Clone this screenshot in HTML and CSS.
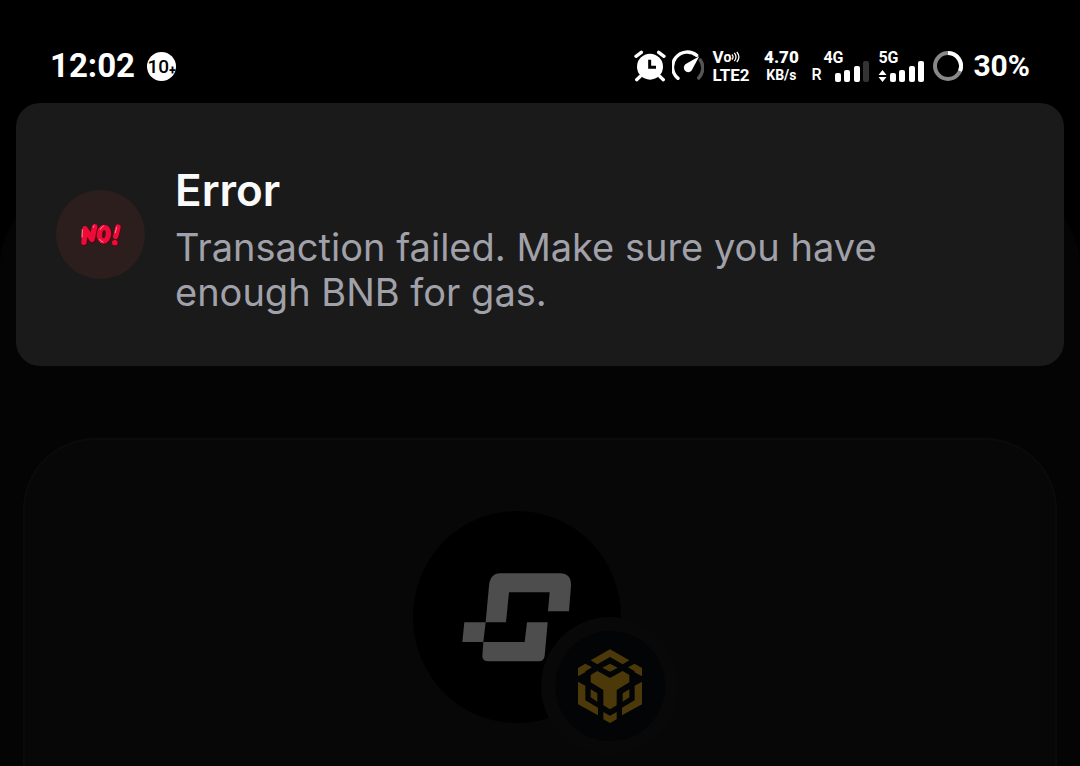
FILE: index.html
```
<!DOCTYPE html>
<html lang="en">
<head>
<meta charset="utf-8">
<meta name="viewport" content="width=device-width, initial-scale=1">
<title>Transaction error</title>
<link rel="stylesheet" href="styles.css">
</head>
<body>
<header class="status">
  <div class="status-side">
    <time class="clock">12:02</time>
    <span class="count">10<span class="plus">+</span></span>
  </div>
  <div class="status-side status-right">
    <svg class="icon-alarm" viewBox="0 0 96 96" aria-label="Alarm">
      <circle cx="48" cy="50" r="39" fill="#fff"/>
      <path d="M6 19L22 7M74 7L90 19M19 79L8 89M77 79L88 89" stroke="#fff" stroke-width="10" stroke-linecap="round"/>
      <path d="M47 29V52H66" fill="none" stroke="#000" stroke-width="9"/>
    </svg>
    <svg class="icon-gauge" viewBox="0 0 96 96" aria-label="Data speed">
      <path d="M18 85A43 43 0 0 1 74 16" fill="none" stroke="#fff" stroke-width="10" stroke-linecap="round"/>
      <path d="M85 30A43 43 0 0 1 80 84" fill="none" stroke="#555" stroke-width="10" stroke-linecap="round"/>
      <path d="M82 19L58 63A13 13 0 1 1 40 43Z" fill="#fff"/>
    </svg>
    <div class="stack lte">
      <span class="vo">V<small>o</small><svg class="waves" viewBox="0 0 12 14"><path d="M1 4Q4 7 1 10M4 2Q8 7 4 12M7 1Q12 7 7 13" fill="none" stroke="#fff" stroke-width="1.5"/></svg></span>
      <span>LTE2</span>
    </div>
    <div class="stack speed"><b>4.70</b><span>KB/s</span></div>
    <div class="signal">
      <span class="net net-roam">4G</span>
      <div class="signal-row">
        <span class="roam">R</span>
        <svg class="bars" viewBox="0 0 34 21"><rect y="12" width="6" height="9" rx="2"/><rect x="9" y="9" width="6" height="12" rx="2"/><rect x="19" y="5" width="6" height="16" rx="2"/><rect class="off" x="28" width="6" height="21" rx="2"/></svg>
      </div>
    </div>
    <div class="signal">
      <span class="net">5G</span>
      <div class="signal-row">
        <svg class="updown" viewBox="0 0 8 12"><path d="M0 5L4 0L8 5ZM0 7L4 12L8 7Z" fill="#fff"/></svg>
        <svg class="bars" viewBox="0 0 34 21"><rect y="12" width="6" height="9" rx="2"/><rect x="9" y="9" width="6" height="12" rx="2"/><rect x="19" y="5" width="6" height="16" rx="2"/><rect x="28" width="6" height="21" rx="2"/></svg>
      </div>
    </div>
    <svg class="ring" viewBox="0 0 30 30"><circle cx="15" cy="15" r="13" fill="none" stroke="#888" stroke-width="4"/><path d="M15 2A13 13 0 0 1 27 20" fill="none" stroke="#fff" stroke-width="4"/></svg>
    <span class="battery">30%</span>
  </div>
</header>

<div class="toast" role="alert">
  <div class="toast-icon">
    <svg viewBox="0 0 126 72" aria-label="No!">
      <g fill="none" stroke-linecap="round" stroke-linejoin="round">
        <path d="M14 60L17 19L38 52L46 13M74 15C57 18 55 54 72 56C91 55 93 16 74 15M116 15L109 42M106 61L107 61" stroke="#4d0716" stroke-width="19"/>
        <path d="M12 58L15 17L36 49L44 11M72 13C55 16 53 52 70 54C89 53 91 14 72 13M114 12L107 40M104 59L105 59" stroke="#f00a38" stroke-width="16"/>
        <path d="M7 20L6 42M40 13L42 9M61 19Q64 11 70 9M110 13L106 29M59 49Q63 57 69 57" stroke="#ff8b9d" stroke-width="3"/>
      </g>
    </svg>
  </div>
  <div class="toast-text">
    <h1>Error</h1>
    <p>Transaction failed. Make sure you have enough BNB for gas.</p>
  </div>
</div>

<main class="sheet">
  <section class="card">
    <div class="token">
      <svg class="token-logo" viewBox="39 32 624 636" aria-label="Token">
        <ellipse cx="351" cy="350" rx="312" ry="318" fill="#000"/>
        <path fill="#4d4d4d" d="M257 366L267 256Q271 219 301 219H480Q514 219 513 256L507 333H444L449 276H327L318 366ZM193 366H257L250 425H187ZM250 425H374L381 366H443L434 466Q432 483 416 483H266Q246 483 247 466Z"/>
      </svg>
      <svg class="chain" viewBox="423 352 414 414" aria-label="BNB Chain">
        <circle cx="630" cy="559" r="207" fill="#080808"/>
        <circle cx="631" cy="559" r="165" fill="#020406"/>
        <path fill="#4c390a" d="M630 449L688 482L668 494L630 472L592 494L572 482ZM630 492L653 504L630 516L607 504ZM534 505L556 492L576 503L556 515V518L534 530ZM726 505L704 492L684 503L704 515V518L726 530ZM534 546L556 558V602L594 624V647L534 614ZM726 546L704 558V602L666 624V647L726 614ZM572 569L592 581V606L572 593ZM688 569L668 581V606L688 593ZM592 514L630 535L668 514L688 526V548L650 571V617L630 629L610 617V571L572 548V526ZM610 637L630 648L650 637V659L630 670L610 659Z"/>
      </svg>
    </div>
  </section>
</main>
</body>
</html>
```
FILE: styles.css
```
* { box-sizing: border-box; }

body {
  margin: 0;
  height: 100vh;
  display: flex;
  flex-direction: column;
  overflow: hidden;
  background: #000;
  color: #fff;
  font-family: Roboto, "Liberation Sans", sans-serif;
}

svg { display: block; flex: none; }

.status {
  display: flex;
  justify-content: space-between;
  align-items: center;
  padding: 46px 50px 17px;
}

.status-side { display: flex; align-items: center; height: 40px; }
.status-side:first-child { gap: 12px; }
.clock, .battery { font-size: 33px; line-height: 40px; font-weight: 700; }
.battery { font-size: 30px; margin-left: 10px; }

.count {
  width: 29px;
  height: 29px;
  border-radius: 50%;
  background: #fff;
  color: #000;
  font-size: 19px;
  line-height: 29px;
  font-weight: 500;
  display: flex;
  justify-content: center;
}
.plus { font-size: 12px; font-weight: 900; line-height: 36px; }

.icon-alarm { width: 32px; height: 32px; margin-right: 6px; }
.icon-gauge { width: 32px; height: 32px; margin-right: 8px; }

.stack { font-size: 17px; line-height: 18px; font-weight: 700; display: flex; flex-direction: column; }
.lte { width: 38px; margin-right: 13px; }
.vo { display: flex; align-items: center; }
.vo small { font-size: 14px; }
.waves { width: 10px; height: 12px; }
.speed { align-items: center; width: 36px; margin-right: 12px; font-size: 14px; }
.speed b { font-size: 17px; }

.signal { display: flex; flex-direction: column; height: 32px; margin-right: 9px; position: relative; justify-content: flex-end; }
.net { position: absolute; top: 0; left: 0; font-size: 16px; line-height: 16px; font-weight: 700; }
.net-roam { left: 12px; }
.signal-row { display: flex; align-items: flex-end; gap: 3px; }
.roam { width: 21px; font-size: 16px; line-height: 14px; font-weight: 500; }
.bars { width: 34px; height: 21px; fill: #fff; }
.off { fill: #333; }
.updown { width: 9px; height: 12px; }
.ring { width: 30px; height: 30px; }

.toast {
  position: relative;
  z-index: 1;
  display: flex;
  align-items: center;
  gap: 30px;
  margin: 0 16px;
  padding: 62px 40px 51px;
  border-radius: 24px;
  background: #1a1a1a;
  font-family: Inter, "Liberation Sans", sans-serif;
}

.toast-icon {
  display: grid;
  place-items: center;
  flex: none;
  width: 89px;
  height: 89px;
  margin-top: -11px;
  border-radius: 50%;
  background: #2d1e1e;
}
.toast-icon svg { width: 42px; height: 24px; }

.toast-text h1 { margin: 0 0 10px; font-size: 44px; line-height: 50px; font-weight: 600; color: #fafafa; }
.toast-text p { margin: 0; max-width: 760px; font-size: 38px; line-height: 45px; color: #a1a1aa; }

.sheet {
  flex: 1;
  display: flex;
  margin-top: -180px;
  padding: 252px 23px 0;
  border-radius: 80px 80px 0 0;
  background: #040404;
}

.card {
  flex: 1;
  display: flex;
  justify-content: center;
  padding: 71px 46px 0 0;
  border: 2px solid #0b0b0b;
  border-bottom: 0;
  border-radius: 72px 72px 0 0;
  background: #070707;
}

.token { position: relative; width: 208px; height: 212px; }
.token-logo { width: 208px; height: 212px; }
.chain { position: absolute; right: -58px; bottom: -32px; width: 138px; height: 138px; }
```
